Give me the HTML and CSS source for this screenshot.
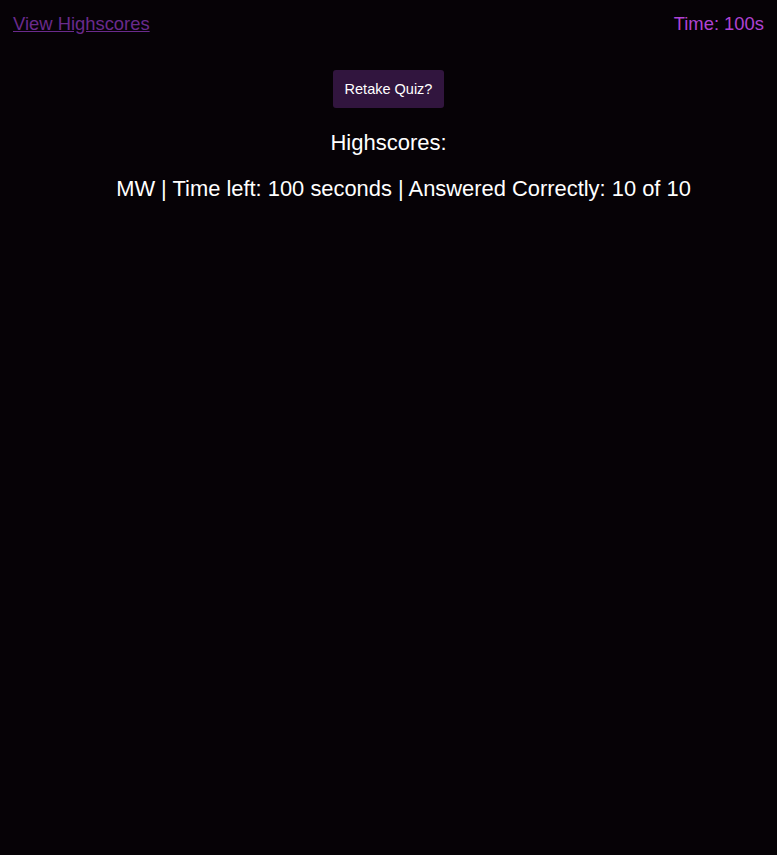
FILE: index.html
```html
<!DOCTYPE html>
<html>
<head>
<meta charset="utf-8">
<link rel="stylesheet" href="styles.css">
</head>
<body>
<header class="top">
  <a class="hs-link" href="#">View Highscores</a>
  <span class="timer">Time: 100s</span>
</header>
<main class="content">
  <button class="retake">Retake Quiz?</button>
  <h2 class="hs-title">Highscores:</h2>
  <ul class="scores">
    <li>MW | Time left: 100 seconds | Answered Correctly: 10 of 10</li>
  </ul>
</main>
</body>
</html>
```
FILE: styles.css
```css
html, body {
  background: #060206;
}
body {
  margin: 0;
  padding: 13px 13px;
  font-family: "Liberation Sans", Arial, sans-serif;
  color: #ffffff;
}
.top {
  display: flex;
  justify-content: space-between;
  align-items: center;
  font-size: 18.4px;
  line-height: 21px;
}
.hs-link {
  color: #6a2a8c;
}
.timer {
  color: #b043d4;
}
.content {
  display: flex;
  flex-direction: column;
  align-items: center;
  margin-top: 36px;
}
.retake {
  background: #31153e;
  color: #ffffff;
  border: none;
  border-radius: 3px;
  font-family: "Liberation Sans", Arial, sans-serif;
  font-size: 14.5px;
  width: 111px;
  height: 38px;
  padding: 0;
}
.hs-title {
  margin: 22px 0 0;
  font-size: 22px;
  font-weight: normal;
  line-height: 25px;
}
.scores {
  list-style: none;
  margin: 21px 0 0;
  padding: 0 0 0 30px;
  font-size: 21.9px;
  line-height: 25px;
}
```
